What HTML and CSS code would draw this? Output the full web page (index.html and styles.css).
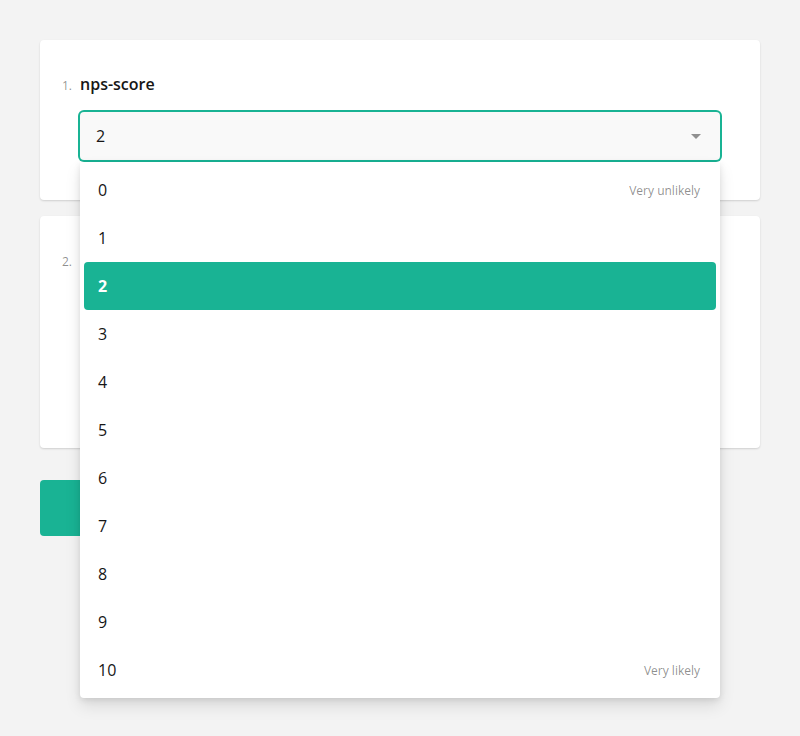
FILE: index.html
```html
<!DOCTYPE html>
<html lang="en">
<head>
<meta charset="utf-8">
<title>Survey</title>
<link rel="stylesheet" href="styles.css">
</head>
<body>
<main class="survey">
  <section class="panel">
    <h3 class="title"><span class="num">1.</span><span class="title-text">nps-score</span></h3>
    <div class="dropdown">
      <div class="input">
        <span class="value">2</span>
        <svg class="arrow" width="10" height="5" viewBox="0 0 10 5"><path d="M0 0h10L5 5z" fill="#909090"/></svg>
      </div>
      <ul class="popup">
        <li class="item"><span>0</span><span class="hint">Very unlikely</span></li>
        <li class="item"><span>1</span></li>
        <li class="item selected"><span>2</span></li>
        <li class="item"><span>3</span></li>
        <li class="item"><span>4</span></li>
        <li class="item"><span>5</span></li>
        <li class="item"><span>6</span></li>
        <li class="item"><span>7</span></li>
        <li class="item"><span>8</span></li>
        <li class="item"><span>9</span></li>
        <li class="item"><span>10</span><span class="hint">Very likely</span></li>
      </ul>
    </div>
  </section>
  <section class="panel">
    <h3 class="title"><span class="num">2.</span><span class="title-text">nps-reason</span></h3>
    <div class="textarea"></div>
  </section>
  <div class="footer">
    <button class="complete">Complete</button>
  </div>
</main>
</body>
</html>
```

FILE: styles.css
```css
* { box-sizing: border-box; }
html, body { margin: 0; padding: 0; }
body {
  background: #f3f3f3;
  font-family: "Open Sans", "Liberation Sans", sans-serif;
  color: #161616;
  width: 800px;
  height: 736px;
  overflow: hidden;
}
.survey {
  padding: 40px;
  display: flex;
  flex-direction: column;
  gap: 16px;
}
.panel {
  background: #fff;
  border-radius: 4px;
  box-shadow: 0 1px 2px rgba(0, 0, 0, 0.15);
  padding: 32px 40px 40px;
  display: flex;
  flex-direction: column;
  gap: 16px;
}
.title {
  margin: 0;
  display: flex;
  align-items: baseline;
  font-size: 16px;
  line-height: 24px;
  font-weight: 600;
  color: #161616;
}
.num {
  margin-left: -18px;
  width: 18px;
  font-size: 12px;
  line-height: 16px;
  font-weight: 400;
  color: rgba(0, 0, 0, 0.45);
}
.dropdown { position: relative; }
.input {
  height: 48px;
  background: #f9f9f9;
  border-radius: 4px;
  box-shadow: 0 0 0 2px #19b394;
  display: flex;
  align-items: center;
  justify-content: space-between;
  padding: 0 19px 0 16px;
  font-size: 16px;
}
.arrow { display: block; margin-top: 1px; }
.popup {
  position: absolute;
  left: 0;
  right: 0;
  top: calc(100% + 2px);
  margin: 0;
  padding: 4px;
  list-style: none;
  background: #fff;
  border-radius: 0 0 4px 4px;
  box-shadow: 0 8px 16px rgba(0, 0, 0, 0.1), 0 2px 6px rgba(0, 0, 0, 0.1);
  z-index: 10;
}
.item {
  height: 48px;
  display: flex;
  align-items: center;
  justify-content: space-between;
  padding: 0 16px 0 14px;
  font-size: 16px;
  border-radius: 4px;
  color: #161616;
}
.item.selected {
  background: #19b394;
  color: #fff;
  font-weight: 700;
}
.hint {
  font-size: 12px;
  color: rgba(0, 0, 0, 0.45);
}
.textarea {
  height: 120px;
  background: #f9f9f9;
  border-radius: 4px;
  box-shadow: inset 0 1px 2px rgba(0, 0, 0, 0.15);
}
.footer { margin-top: 16px; display: flex; }
.complete {
  height: 56px;
  padding: 0 48px;
  border: none;
  border-radius: 4px;
  background: #19b394;
  color: #fff;
  font-family: inherit;
  font-size: 16px;
  font-weight: 600;
}
```
